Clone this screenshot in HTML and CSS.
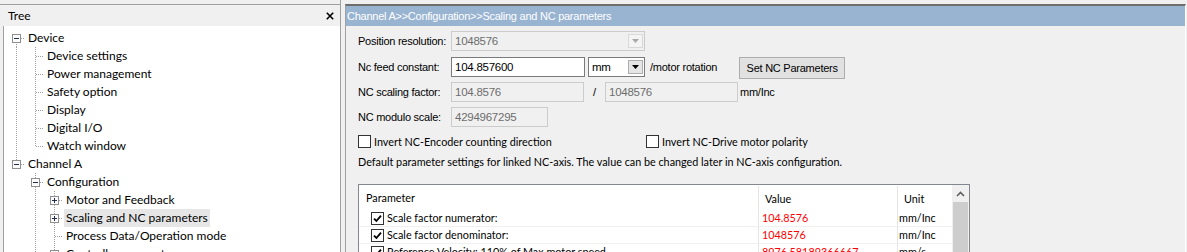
FILE: index.html
```html
<!DOCTYPE html>
<html>
  <head>
    <title>Scaling and NC parameters</title>
    <link rel="stylesheet" href="styles.css">
  </head>
  <body>
    <aside class="tree-pane">
      <div class="tree-head">
        <span>Tree</span>
        <svg class="close" width="8" height="8" viewBox="0 0 8 8"><path d="M0.8 0.8L7.2 7.2M7.2 0.8L0.8 7.2" stroke="#000" stroke-width="1.6"/></svg>
      </div>
      <div class="tree-body">
        <div class="row"><span class="g bd"><svg class="tog" width="9" height="9"><rect x=".5" y=".5" width="8" height="8" fill="#fbfbfb" stroke="#8f8f8f"/><path d="M2 4.5h5" stroke="#1d2f4d"/></svg></span><span class="lbl">Device</span></div>
        <div class="row"><span class="g v"></span><span class="g t"></span><span class="lbl">Device settings</span></div>
        <div class="row"><span class="g v"></span><span class="g t"></span><span class="lbl">Power management</span></div>
        <div class="row"><span class="g v"></span><span class="g t"></span><span class="lbl">Safety option</span></div>
        <div class="row"><span class="g v"></span><span class="g t"></span><span class="lbl">Display</span></div>
        <div class="row"><span class="g v"></span><span class="g t"></span><span class="lbl">Digital I/O</span></div>
        <div class="row"><span class="g v"></span><span class="g e"></span><span class="lbl">Watch window</span></div>
        <div class="row"><span class="g bu"><svg class="tog" width="9" height="9"><rect x=".5" y=".5" width="8" height="8" fill="#fbfbfb" stroke="#8f8f8f"/><path d="M2 4.5h5" stroke="#1d2f4d"/></svg></span><span class="lbl">Channel A</span></div>
        <div class="row"><span class="g"></span><span class="g bud"><svg class="tog" width="9" height="9"><rect x=".5" y=".5" width="8" height="8" fill="#fbfbfb" stroke="#8f8f8f"/><path d="M2 4.5h5" stroke="#1d2f4d"/></svg></span><span class="lbl">Configuration</span></div>
        <div class="row"><span class="g"></span><span class="g v"></span><span class="g bud"><svg class="tog" width="9" height="9"><rect x=".5" y=".5" width="8" height="8" fill="#fbfbfb" stroke="#8f8f8f"/><path d="M2 4.5h5M4.5 2v5" stroke="#1d2f4d"/></svg></span><span class="lbl">Motor and Feedback</span></div>
        <div class="row"><span class="g"></span><span class="g v"></span><span class="g bud"><svg class="tog" width="9" height="9"><rect x=".5" y=".5" width="8" height="8" fill="#fbfbfb" stroke="#8f8f8f"/><path d="M2 4.5h5M4.5 2v5" stroke="#1d2f4d"/></svg></span><span class="lbl sel">Scaling and NC parameters</span></div>
        <div class="row"><span class="g"></span><span class="g v"></span><span class="g t"></span><span class="lbl">Process Data/Operation mode</span></div>
        <div class="row"><span class="g"></span><span class="g v"></span><span class="g bud"><svg class="tog" width="9" height="9"><rect x=".5" y=".5" width="8" height="8" fill="#fbfbfb" stroke="#8f8f8f"/><path d="M2 4.5h5M4.5 2v5" stroke="#1d2f4d"/></svg></span><span class="lbl">Controller parameters</span></div>
      </div>
    </aside>

    <main class="detail">
      <div class="caption">Channel A&gt;&gt;Configuration&gt;&gt;Scaling and NC parameters</div>
      <div class="form">
        <div class="frow r1">
          <span class="flabel">Position resolution:</span>
          <div class="combo off w194"><span class="cval">1048576</span><span class="drop"><svg width="7" height="4"><path d="M0 0h7L3.5 4z" fill="#a8a8a8"/></svg></span></div>
        </div>
        <div class="frow r2">
          <span class="flabel">Nc feed constant:</span>
          <div class="tbox w134">104.857600</div>
          <div class="combo w57"><span class="cval">mm</span><span class="drop"><svg width="7" height="4"><path d="M0 0h7L3.5 4z" fill="#000"/></svg></span></div>
          <span class="ftext per">/motor rotation</span>
          <button class="btn">Set NC Parameters</button>
        </div>
        <div class="frow r3">
          <span class="flabel">NC scaling factor:</span>
          <div class="tbox off w133">104.8576</div>
          <span class="ftext slash">/</span>
          <div class="tbox off w133">1048576</div>
          <span class="ftext unit">mm/Inc</span>
        </div>
        <div class="frow r4">
          <span class="flabel">NC modulo scale:</span>
          <div class="tbox off w97">4294967295</div>
        </div>

        <div class="checks">
          <label class="chk first"><span class="cbox"></span>Invert NC-Encoder counting direction</label>
          <label class="chk"><span class="cbox"></span>Invert NC-Drive motor polarity</label>
        </div>
        <p class="note">Default parameter settings for linked NC-axis. The value can be changed later in NC-axis configuration.</p>

        <div class="grid">
          <div class="grid-cols">
            <div class="ghead">
              <span class="c-par">Parameter</span>
              <span class="c-val">Value</span>
              <span class="c-unit">Unit</span>
            </div>
            <div class="grow">
              <span class="c-par"><span class="cbox on"><svg width="11" height="11" viewBox="0 0 11 11"><path d="M2 5.6L4.4 8L9 2.6" fill="none" stroke="#000" stroke-width="1.8"/></svg></span>Scale factor numerator:</span>
              <span class="c-val">104.8576</span>
              <span class="c-unit">mm/Inc</span>
            </div>
            <div class="grow">
              <span class="c-par"><span class="cbox on"><svg width="11" height="11" viewBox="0 0 11 11"><path d="M2 5.6L4.4 8L9 2.6" fill="none" stroke="#000" stroke-width="1.8"/></svg></span>Scale factor denominator:</span>
              <span class="c-val">1048576</span>
              <span class="c-unit">mm/Inc</span>
            </div>
            <div class="grow">
              <span class="c-par"><span class="cbox on"><svg width="11" height="11" viewBox="0 0 11 11"><path d="M2 5.6L4.4 8L9 2.6" fill="none" stroke="#000" stroke-width="1.8"/></svg></span>Reference Velocity: 110% of Max motor speed</span>
              <span class="c-val">8976.58189366667</span>
              <span class="c-unit">mm/s</span>
            </div>
          </div>
          <div class="vscroll">
            <div class="sarrow"><svg width="9" height="6"><path d="M1 5L4.5 1.5L8 5" fill="none" stroke="#606060" stroke-width="1.6"/></svg></div>
            <div class="thumb"></div>
          </div>
        </div>
      </div>
    </main>
  </body>
</html>
```
FILE: styles.css
```css
:root {
  --vd: repeating-linear-gradient(to bottom, #a0a0a0 0 1px, transparent 1px 2px);
  --hd: repeating-linear-gradient(to right, #a0a0a0 0 1px, transparent 1px 2px);
}

body {
  margin: 0;
  width: 1187px;
  height: 252px;
  overflow: hidden;
  display: flex;
  background-color: #f0f0f0;
  font-family: Lato, "Noto Sans", sans-serif;
  color: #000;
}

/* tree */

.tree-pane {
  width: 340px;
  padding-top: 4px;
  display: flex;
  flex-direction: column;
  border-right: 1px solid #a0a0a0;
}

.tree-head {
  flex: none;
  height: 21px;
  border-top: 1px solid #a0a0a0;
  display: flex;
  align-items: center;
  justify-content: space-between;
  padding: 0 8px 0 8px;
  font-size: 12px;
}

.close {
  margin-right: -2px;
}

.tree-body {
  flex: 1;
  min-height: 0;
  overflow: hidden;
  margin-left: 3px;
  border-left: 1px solid #a0a0a0;
  background-color: #ffffff;
  padding: 3px 0 0 2px;
  font-size: 12px;
}

.row {
  display: flex;
  height: 18px;
  align-items: center;
}

.g {
  flex: none;
  width: 19px;
  height: 18px;
  display: flex;
  align-items: center;
  padding-left: 6px;
  box-sizing: border-box;
  background-repeat: no-repeat;
}

.g.v {
  background-image: var(--vd);
  background-size: 1px 18px;
  background-position: 10px 0;
}

.g.t, .g.bud {
  background-image: var(--vd), var(--hd);
  background-size: 1px 18px, 8px 1px;
  background-position: 10px 0, 11px 9px;
}

.g.e, .g.bu {
  background-image: var(--vd), var(--hd);
  background-size: 1px 10px, 8px 1px;
  background-position: 10px 0, 11px 9px;
}

.g.bd {
  background-image: var(--vd), var(--hd);
  background-size: 1px 9px, 8px 1px;
  background-position: 10px 9px, 11px 9px;
}

.tog {
  display: block;
}

.lbl {
  margin-left: 1px;
  padding: 0 2px;
  line-height: 18px;
  white-space: nowrap;
}

.lbl.sel {
  background-color: #e6e6e6;
}

/* detail */

.detail {
  flex: 1;
  margin: 4px 1px 0 4px;
  border-top: 2px solid #6e6e6e;
  border-left: 1px solid #a0a0a0;
  border-right: 1px solid #ffffff;
}

.caption {
  height: 20px;
  line-height: 20px;
  background-color: #99b4d1;
  color: #ffffff;
  padding-left: 1px;
  font-family: "Liberation Sans", Arial, sans-serif;
  font-size: 11px;
  letter-spacing: -0.25px;
  white-space: nowrap;
}

.form {
  padding: 5px 12px 0 12px;
  font-family: "Liberation Sans", Arial, sans-serif;
  font-size: 11px;
  letter-spacing: -0.25px;
}

.frow {
  display: flex;
  align-items: flex-start;
  height: 20px;
}

.r1 { margin-bottom: 6px; }
.r2 { height: 22px; margin-bottom: 3px; }
.r3 { margin-bottom: 5px; }

.flabel {
  width: 93px;
  flex: none;
  line-height: 20px;
}

.ftext {
  line-height: 20px;
  white-space: nowrap;
}

.tbox {
  height: 20px;
  box-sizing: border-box;
  border: 1px solid #7a7a7a;
  background-color: #ffffff;
  padding: 0 3px;
  line-height: 18px;
  font-size: 11.5px;
}

.tbox.off, .combo.off {
  border-color: #cccccc;
  background-color: #f0f0f0;
  color: #6d6d6d;
}

.w194 { width: 194px; }
.w134 { width: 134px; }
.w133 { width: 133px; }
.w97 { width: 97px; }
.w57 { width: 57px; margin-left: 3px; }

.combo {
  height: 20px;
  box-sizing: border-box;
  border: 1px solid #7a7a7a;
  background-color: #ffffff;
  display: flex;
  align-items: center;
  justify-content: space-between;
  padding: 0 1px 0 3px;
}

.combo .cval {
  font-size: 11.5px;
}

.drop {
  width: 15px;
  height: 14px;
  box-sizing: border-box;
  border: 1px solid #adadad;
  background-color: #e5e5e5;
  display: flex;
  align-items: center;
  justify-content: center;
}

.combo.off .drop {
  border-color: #d9d9d9;
  background-color: #f4f4f4;
}

.per {
  margin-left: 5px;
}

.btn {
  margin-left: 22px;
  width: 106px;
  height: 22px;
  border: 1px solid #adadad;
  background-color: #e1e1e1;
  font-family: "Liberation Sans", Arial, sans-serif;
  font-size: 11px;
  letter-spacing: -0.25px;
  padding: 0;
  color: #000;
}

.slash {
  width: 21px;
  text-align: center;
}

.unit {
  margin-left: 2px;
}

.checks {
  display: flex;
  margin-top: 8px;
  height: 13px;
  align-items: center;
  font-family: Lato, "Noto Sans", sans-serif;
  font-size: 10.8px;
  letter-spacing: 0;
}

.chk {
  display: flex;
  align-items: center;
  white-space: nowrap;
}

.chk.first {
  width: 288px;
}

.cbox {
  width: 13px;
  height: 13px;
  box-sizing: border-box;
  border: 1px solid #333333;
  background-color: #ffffff;
  margin-right: 3px;
  flex: none;
  display: flex;
  align-items: center;
  justify-content: center;
}

.note {
  margin: 7px 0 0 0;
  line-height: 14px;
  font-family: Lato, "Noto Sans", sans-serif;
  font-size: 10.8px;
  letter-spacing: 0;
  white-space: nowrap;
}

.grid {
  margin-top: 15px;
  width: 610px;
  height: 80px;
  border: 1px solid #828790;
  background-color: #ffffff;
  display: flex;
  font-family: Lato, "Noto Sans", sans-serif;
  font-size: 10.8px;
  letter-spacing: 0;
}

.grid-cols {
  width: 593px;
}

.ghead, .grow {
  display: flex;
}

.ghead {
  height: 25px;
  align-items: center;
}

.ghead span {
  height: 24px;
  line-height: 26px;
  box-sizing: border-box;
}

.ghead .c-par { padding-left: 7px; }
.ghead .c-val { padding-left: 6px; }
.ghead .c-unit { padding-left: 6px; }

.c-par {
  width: 400px;
  flex: none;
  display: flex;
  align-items: center;
  border-right: 1px solid #e5e5e5;
}

.c-val {
  width: 139px;
  flex: none;
  border-right: 1px solid #e5e5e5;
}

.c-unit {
  flex: 1;
}

.grow {
  height: 17px;
  box-sizing: border-box;
  border-bottom: 1px solid #f0f0f0;
  line-height: 16px;
  white-space: nowrap;
}

.grow .c-par {
  padding-left: 12px;
  box-sizing: border-box;
}

.grow .c-par .cbox {
  margin-right: 3px;
}

.grow .c-val {
  padding-left: 3px;
  color: #ff0000;
  box-sizing: border-box;
}

.grow .c-unit {
  padding-left: 1px;
}

.vscroll {
  width: 17px;
  background-color: #f0f0f0;
}

.sarrow {
  height: 17px;
  display: flex;
  align-items: center;
  justify-content: center;
}

.thumb {
  margin: 0 1px;
  height: 60px;
  background-color: #cdcdcd;
}
```
